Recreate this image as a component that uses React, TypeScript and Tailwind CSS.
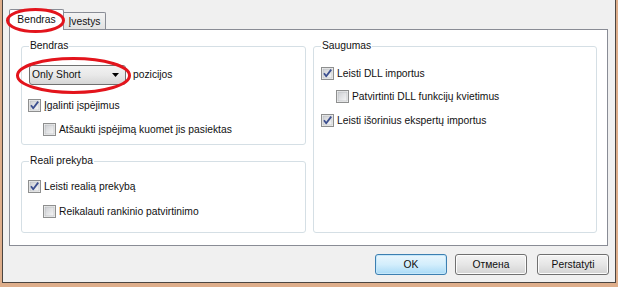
import React from 'react';

function CheckBox({ checked }: { checked?: boolean }) {
  return (
    <svg width="13" height="13" viewBox="0 0 13 13" className="shrink-0">
      <defs>
        <linearGradient id="cbg" x1="0" y1="0" x2="1" y2="1">
          <stop offset="0" stopColor="#cdcfd3" />
          <stop offset="1" stopColor="#f7f7f7" />
        </linearGradient>
      </defs>
      <rect x="0.5" y="0.5" width="12" height="12" fill="#f4f4f4" stroke="#8e8f8f" />
      <rect x="2" y="2" width="9" height="9" fill="url(#cbg)" stroke="#b5b8bc" strokeWidth="0.6" />
      {checked && (
        <path d="M3 6.3 L5.2 9.2 L10.2 2.6" fill="none" stroke="#3c4f8f" strokeWidth="1.8" strokeLinejoin="round" />
      )}
    </svg>
  );
}

function Row({ checked, label, className }: { checked?: boolean; label: string; className: string }) {
  return (
    <div className={'flex items-center h-[13px] ' + className}>
      <CheckBox checked={checked} />
      <span className="ml-[3px] leading-[13px] whitespace-nowrap">{label}</span>
    </div>
  );
}

function Group({ title, className, children }: { title: string; className: string; children: React.ReactNode }) {
  return (
    <fieldset className={'border border-[#d5dfe5] rounded-[3px] ' + className}>
      <legend className="ml-[7px] px-[1px] leading-[12px]">{title}</legend>
      {children}
    </fieldset>
  );
}

function WinButton({ label, primary }: { label: string; primary?: boolean }) {
  return (
    <button
      className={
        'h-[21px] w-[72px] rounded-[3px] border leading-[19px] text-center ' +
        (primary
          ? 'border-[#3c7fb1] bg-gradient-to-b from-[#eaf6fd] via-[#d3eefc] to-[#a9daf6] shadow-[inset_0_0_0_1px_#c5e7fa]'
          : 'border-[#707070] bg-gradient-to-b from-[#f4f4f4] via-[#e6e6e6] to-[#d3d3d3] shadow-[inset_0_0_0_1px_#fcfcfc]')
      }
    >
      {label}
    </button>
  );
}

export default function App() {
  return (
    <div className="relative w-[618px] h-[287px] bg-[#deae8b] font-['Liberation_Sans',Arial,sans-serif] text-[10.3px] text-[#111]">
      <div className="ml-[2px] w-[614px] h-[283px] bg-[#f0f0f0] border-x border-b border-[#4b4541] pt-[9px] pl-[6px]">
        {/* tabs */}
        <div className="flex items-end h-[20px]">
          <div className="relative z-10 -mb-px h-[21px] w-[55px] bg-white border border-b-0 border-[#898c95] rounded-t-[2px] text-center leading-[19px]">
            Bendras
          </div>
          <div className="h-[17px] w-[42px] border border-b-0 border-l-0 border-[#898c95] rounded-tr-[2px] bg-gradient-to-b from-[#f3f3f3] to-[#e2e2e2] text-center leading-[18px]">
            Įvestys
          </div>
        </div>

        {/* panel */}
        <div className="w-[599px] h-[217px] border border-[#898c95] bg-white flex pl-[11px] pr-[10px] pt-[10px] gap-[7px]">
          <div className="flex flex-col w-[285px]">
            <Group title="Bendras" className="h-[105px]">
              <div className="flex items-center mt-[13px] pl-[7px]">
                <div className="h-[20px] w-[97px] border border-[#707070] rounded-[3px] bg-gradient-to-b from-[#f2f2f2] via-[#e9e9e9] to-[#d6d6d6] flex items-center pl-[2px] pr-[6px]">
                  <span className="flex-1 leading-[18px]">Only Short</span>
                  <svg width="7" height="4" viewBox="0 0 7 4">
                    <path d="M0 0 H7 L3.5 4 Z" fill="#000" />
                  </svg>
                </div>
                <span className="ml-[7px]">pozicijos</span>
              </div>
              <Row checked label="Įgalinti įspėjimus" className="mt-[14px] pl-[6px]" />
              <Row label="Atšaukti įspėjimą kuomet jis pasiektas" className="mt-[11px] pl-[21px]" />
            </Group>
            <Group title="Reali prekyba" className="mt-[10px] h-[78px]">
              <Row checked label="Leisti realią prekybą" className="mt-[13px] pl-[6px]" />
              <Row label="Reikalauti rankinio patvirtinimo" className="mt-[12px] pl-[21px]" />
            </Group>
          </div>
          <Group title="Saugumas" className="w-[284px] h-[193px]">
            <Row checked label="Leisti DLL importus" className="mt-[15px] pl-[7px]" />
            <Row label="Patvirtinti DLL funkcijų kvietimus" className="mt-[10px] pl-[22px]" />
            <Row checked label="Leisti išorinius ekspertų importus" className="mt-[11px] pl-[7px]" />
          </Group>
        </div>

        {/* buttons */}
        <div className="w-[600px] flex justify-end mt-[8px]">
          <WinButton label="OK" primary />
          <div className="ml-[8px]">
            <WinButton label="Отмена" />
          </div>
          <div className="ml-[10px]">
            <WinButton label="Perstatyti" />
          </div>
        </div>
      </div>

      {/* red marker ellipses */}
      <svg className="absolute inset-0 pointer-events-none z-20" width="618" height="287">
        <ellipse cx="35.5" cy="20.5" rx="28" ry="11" fill="none" stroke="#e3141c" strokeWidth="3" />
        <ellipse cx="73.5" cy="75.5" rx="56" ry="17" fill="none" stroke="#e3141c" strokeWidth="3" />
      </svg>
    </div>
  );
}
